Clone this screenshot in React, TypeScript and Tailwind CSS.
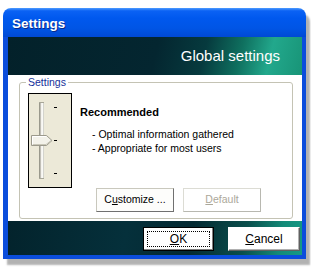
import React from 'react';

const Slider: React.FC = () => (
  <div className="w-[44px] h-[95px] shrink-0 border border-black bg-[#ece9d8]">
    <svg width="42" height="93" viewBox="0 0 42 93">
      {/* groove */}
      <rect x="10.5" y="8.5" width="4" height="76" fill="#f4f3ee" stroke="#a7a698" />
      <line x1="11" y1="9" x2="11" y2="84" stroke="#8d8c80" />
      <line x1="14" y1="9" x2="14" y2="84" stroke="#ffffff" />
      {/* ticks */}
      <line x1="25" y1="13.5" x2="28" y2="13.5" stroke="#000" />
      <line x1="25" y1="46.5" x2="28" y2="46.5" stroke="#000" />
      <line x1="25" y1="79.5" x2="28" y2="79.5" stroke="#000" />
      {/* thumb */}
      <path d="M2.5 41.5 H17.5 L23 46.5 L17.5 51.5 H2.5 Z" fill="#f3f2ea" stroke="#9c9a8c" />
      <path d="M3.5 50.5 H17 L22 46.5" fill="none" stroke="#c9c7b8" />
      <path d="M3.5 50.5 V42.5 H17" fill="none" stroke="#ffffff" />
    </svg>
  </div>
);

export default function App() {
  return (
    <div className="w-[311px] h-[271px] bg-white pl-[3px] pt-[8px] font-['Liberation_Sans',Arial,sans-serif]">
      <div className="flex flex-col w-[303px] h-[251px] rounded-t-[8px] shadow-[4px_6px_2px_rgba(0,0,0,0.3)]">
        {/* title bar */}
        <div className="h-[29px] shrink-0 flex items-center pl-[9px] pt-[4px] rounded-t-[8px] bg-[linear-gradient(180deg,#4d9bff_0%,#0b62f4_10%,#0058ee_35%,#0055e5_70%,#0049d4_100%)]">
          <span className="text-[13.5px] font-bold text-white [text-shadow:1px_1px_0_#0b2b8a]">Settings</span>
        </div>

        <div className="flex-1 flex flex-col border-l-[5px] border-r-[4px] border-b-[4px] border-[#0b4ddc]">
          {/* banner */}
          <div className="h-[38px] shrink-0 flex items-center justify-end pr-[22px] pt-[1px] bg-[linear-gradient(104deg,#03212a_0%,#042630_50%,#063a3e_66%,#0f705f_78%,#22a88c_88%,#189477_100%)]">
            <span className="text-[15px] text-white">Global settings</span>
          </div>

          {/* content */}
          <div className="h-[146px] shrink-0 bg-white pt-[7px] pl-[11px] pr-[9px] pb-[2px]">
            <div className="relative h-full border border-[#c4c3b4] rounded-[3px] flex items-start pt-[10px] pl-[8px]">
              <span className="absolute top-[-8px] left-[6px] bg-white px-[2px] text-[10.5px] leading-[14px] text-[#16309a]">
                Settings
              </span>
              <Slider />
              <div className="ml-[8px] flex flex-col">
                <div className="mt-[13px] text-[11px] leading-[13px] font-bold text-black">Recommended</div>
                <div className="mt-[8px] pl-[12px] text-[10.5px] leading-[14px] text-black">
                  <div>- Optimal information gathered</div>
                  <div>- Appropriate for most users</div>
                </div>
                <div className="mt-[33px] ml-[16px] flex gap-[9px]">
                  <div className="w-[78px] h-[24px] flex items-center justify-center bg-[#fdfdfb] border border-[#c9c8bd] border-r-[#707070] border-b-[#707070] text-[10.5px] text-black">
                    <span>C<span className="underline">u</span>stomize ...</span>
                  </div>
                  <div className="w-[78px] h-[24px] flex items-center justify-center bg-white border border-[#dcdcd4] border-r-[#b8b8b0] border-b-[#b8b8b0] text-[10.5px] text-[#aca899]">
                    <span><span className="underline">D</span>efault</span>
                  </div>
                </div>
              </div>
            </div>
          </div>

          {/* bottom band */}
          <div className="flex-1 flex justify-end items-start pt-[6px] pr-[2px] gap-[14px] bg-[linear-gradient(100deg,#03232c_0%,#05303b_40%,#042a32_62%,#0a4f4c_80%,#138a78_92%,#159a86_100%)]">
            <div className="w-[71px] h-[24px] p-[3px] bg-white border border-black shadow-[inset_-1px_-1px_0_#808080]">
              <div className="h-full flex items-center justify-center border border-dotted border-black text-[12px] text-black">
                <span><span className="underline">O</span>K</span>
              </div>
            </div>
            <div className="w-[72px] h-[24px] flex items-center justify-center bg-white border border-white border-r-[#606060] border-b-[#606060] shadow-[inset_-1px_-1px_0_#b0b0b0] text-[12px] text-black">
              <span><span className="underline">C</span>ancel</span>
            </div>
          </div>
        </div>
      </div>
    </div>
  );
}
